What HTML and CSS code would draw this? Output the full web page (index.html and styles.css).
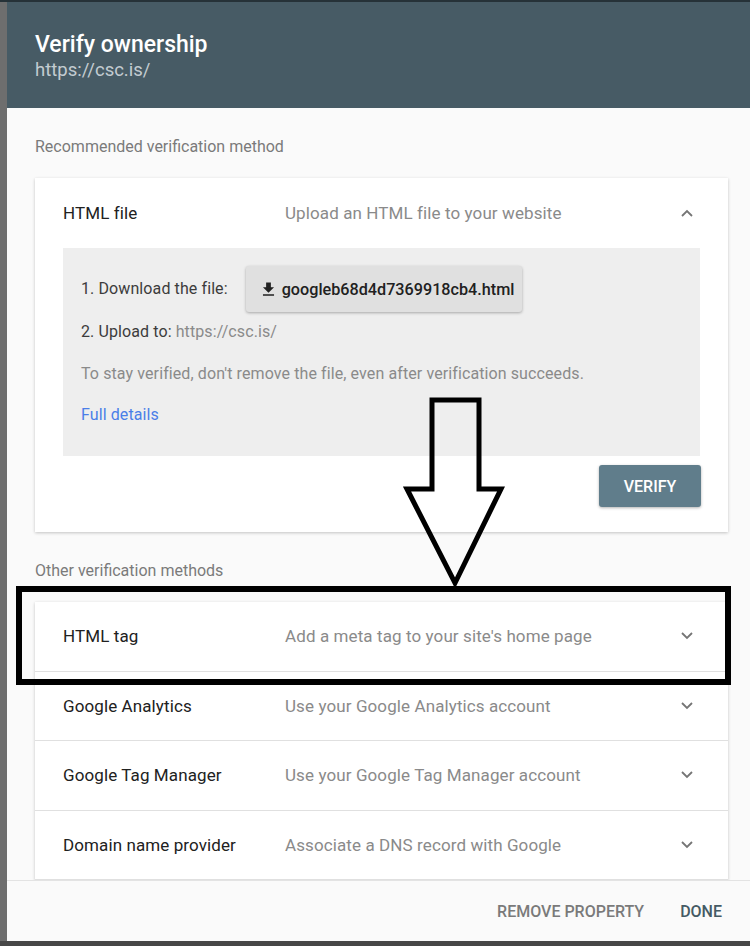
FILE: index.html
```html
<!DOCTYPE html>
<html lang="en">
<head>
    <meta charset="UTF-8">
    <title>Verify ownership</title>
    <link rel="stylesheet" href="styles.css">
</head>
<body>
    <div class="top-strip"></div>
    <div class="dialog">
        <div class="dialog-header">
            <h1 class="dialog-title">Verify ownership</h1>
            <p class="dialog-url">https://csc.is/</p>
        </div>

        <div class="dialog-body">
            <p class="section-label">Recommended verification method</p>

            <div class="card">
                <div class="method-row">
                    <span class="method-name">HTML file</span>
                    <span class="method-desc">Upload an HTML file to your website</span>
                    <svg class="chevron" width="14" height="8" viewBox="0 0 14 8"><polyline points="2,7 7,2 12,7" fill="none" stroke="#757575" stroke-width="1.8"/></svg>
                </div>

                <div class="steps">
                    <div class="step-download">
                        <span class="step-text">1. Download the file:</span>
                        <button class="file-button">
                            <svg width="19" height="19" viewBox="0 0 24 24"><path d="M19 9h-4V3H9v6H5l7 7 7-7zM5 18v2h14v-2H5z" fill="#212121"/></svg>
                            googleb68d4d7369918cb4.html
                        </button>
                    </div>
                    <p class="step-text step-upload">2. Upload to: <span class="muted">https://csc.is/</span></p>
                    <p class="step-note">To stay verified, don't remove the file, even after verification succeeds.</p>
                    <a class="details-link" href="#">Full details</a>
                </div>

                <div class="card-actions">
                    <button class="verify-button">VERIFY</button>
                </div>
            </div>

            <p class="section-label">Other verification methods</p>

            <div class="card method-list">
                <div class="method-row">
                    <span class="method-name">HTML tag</span>
                    <span class="method-desc">Add a meta tag to your site's home page</span>
                    <svg class="chevron" width="14" height="8" viewBox="0 0 14 8"><polyline points="2,1 7,6 12,1" fill="none" stroke="#757575" stroke-width="1.8"/></svg>
                </div>
                <div class="method-row">
                    <span class="method-name">Google Analytics</span>
                    <span class="method-desc">Use your Google Analytics account</span>
                    <svg class="chevron" width="14" height="8" viewBox="0 0 14 8"><polyline points="2,1 7,6 12,1" fill="none" stroke="#757575" stroke-width="1.8"/></svg>
                </div>
                <div class="method-row">
                    <span class="method-name">Google Tag Manager</span>
                    <span class="method-desc">Use your Google Tag Manager account</span>
                    <svg class="chevron" width="14" height="8" viewBox="0 0 14 8"><polyline points="2,1 7,6 12,1" fill="none" stroke="#757575" stroke-width="1.8"/></svg>
                </div>
                <div class="method-row">
                    <span class="method-name">Domain name provider</span>
                    <span class="method-desc">Associate a DNS record with Google</span>
                    <svg class="chevron" width="14" height="8" viewBox="0 0 14 8"><polyline points="2,1 7,6 12,1" fill="none" stroke="#757575" stroke-width="1.8"/></svg>
                </div>
            </div>
        </div>

        <div class="dialog-footer">
            <button class="text-button">REMOVE PROPERTY</button>
            <button class="text-button primary">DONE</button>
        </div>
    </div>
    <div class="bottom-strip"></div>

    <!-- annotation drawn over the screenshot -->
    <div class="highlight-box"></div>
    <svg class="arrow" width="110" height="196" viewBox="0 0 110 196">
        <polygon points="33,3 76,3 76,92 98,92 52,186 4,92 29,92 29,3" fill="none" stroke="#000" stroke-width="5" stroke-linejoin="miter"/>
    </svg>
</body>
</html>
```

FILE: styles.css
```css
body, html {
    margin: 0;
    padding: 0;
    width: 100%;
    height: 100%;
    overflow: hidden;
    background: #6e6e6e;
    font-family: 'Roboto', sans-serif;
}

.top-strip {
    height: 2px;
    background: #263238;
}

.dialog {
    display: flex;
    flex-direction: column;
    margin-left: 7px;
    width: 743px;
    height: 939px;
    background: #fafafa;
}

.dialog-header {
    flex: none;
    height: 106px;
    box-sizing: border-box;
    padding: 28px 28px 0;
    background: #475b65;
}

.dialog-title {
    margin: 0;
    font-size: 23px;
    font-weight: 500;
    line-height: 29px;
    color: #ffffff;
}

.dialog-url {
    margin: 0;
    font-size: 18.5px;
    line-height: 22px;
    color: #c3ccd1;
}

.dialog-body {
    flex: 1;
    overflow: hidden;
    padding: 0 22px 0 28px;
}

.section-label {
    margin: 0;
    padding: 29px 0 21px;
    font-size: 16px;
    line-height: 20px;
    color: #7a7a7a;
}

.card {
    background: #ffffff;
    box-shadow: 0 1px 3px rgba(0, 0, 0, 0.22);
}

.method-row {
    display: flex;
    align-items: center;
    height: 69px;
    padding: 0 34px 0 28px;
    font-size: 17px;
    letter-spacing: 0.1px;
}

.method-list .method-row {
    height: 68.5px;
    border-bottom: 1px solid #e0e0e0;
}

.method-name {
    width: 222px;
    color: #212121;
}

.method-desc {
    flex: 1;
    color: #8a8a8a;
}

.steps {
    margin: 1px 28px 0;
    padding: 18px 18px 31px;
    background: #eeeeee;
    font-size: 16px;
    line-height: 20px;
    letter-spacing: 0.1px;
}

.step-download {
    display: flex;
    align-items: center;
}

.step-text {
    color: #3c3c3c;
}

.file-button {
    display: flex;
    align-items: center;
    gap: 4px;
    margin-left: 18px;
    height: 46px;
    padding: 0 8px 0 13px;
    border: none;
    border-radius: 3px;
    background: #e0e0e0;
    box-shadow: 0 1px 3px rgba(0, 0, 0, 0.3);
    font-family: 'Roboto', sans-serif;
    font-size: 16.2px;
    font-weight: 500;
    color: #212121;
}

.step-upload {
    margin: 10px 0 0;
}

.muted {
    color: #8a8a8a;
}

.step-note {
    margin: 22px 0 0;
    color: #8a8a8a;
}

.details-link {
    display: block;
    margin-top: 21px;
    color: #4a7ee8;
    text-decoration: none;
}

.card-actions {
    display: flex;
    justify-content: flex-end;
    padding: 9px 27px 25px;
}

.verify-button {
    width: 102px;
    height: 42px;
    border: none;
    border-radius: 3px;
    background: #607d8b;
    box-shadow: 0 1px 3px rgba(0, 0, 0, 0.3);
    font-family: 'Roboto', sans-serif;
    font-size: 16px;
    font-weight: 500;
    color: #ffffff;
}

.dialog-footer {
    flex: none;
    display: flex;
    justify-content: flex-end;
    align-items: center;
    gap: 36px;
    height: 60px;
    padding-right: 28px;
    border-top: 1px solid #e3e3e3;
    background: #fafafa;
}

.text-button {
    border: none;
    background: transparent;
    padding: 0;
    font-family: 'Roboto', sans-serif;
    font-size: 16px;
    font-weight: 500;
    color: #7a7a7a;
}

.text-button.primary {
    color: #455a64;
}

.bottom-strip {
    height: 5px;
    background: #474747;
}

.highlight-box {
    position: absolute;
    left: 16px;
    top: 586px;
    width: 703px;
    height: 87px;
    border: 6px solid #000000;
}

.arrow {
    position: absolute;
    left: 403px;
    top: 397px;
}
```
